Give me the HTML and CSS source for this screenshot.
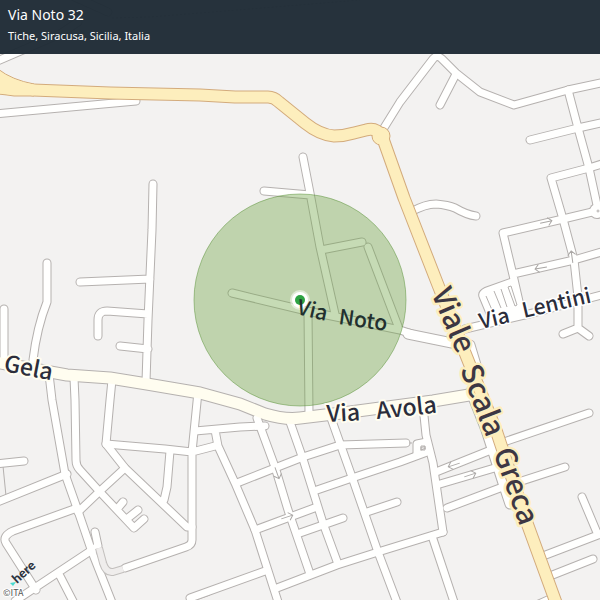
FILE: index.html
```html
<!DOCTYPE html>
<html lang="it">
<head>
<meta charset="utf-8">
<meta name="viewport" content="width=device-width, initial-scale=1">
<title>Via Noto 32</title>
<link rel="stylesheet" href="styles.css">
</head>
<body>
<main class="map">
<svg class="map-canvas" viewBox="0 0 600 600" role="img" aria-label="Via Noto 32, Tiche, Siracusa">
  <defs>
    <g id="streets">
      <path d="M382 131L400 102L433 59Q437 54 442 59L456 73L480 92L514 105L568 90L605 82"/>
      <path d="M456 74L440 105M568 90L578 128L589 168L597 205M530 140L578 128L605 122"/>
      <path d="M605 163L589 168L551 178L563 219L574 260L578 297L578 328M563 334L578 328L589 336"/>
      <path d="M605 209L563 219L503 233L513 275L521 310M605 251L574 260L513 274"/>
      <path d="M465 329L533 313L605 294"/>
      <path d="M232 293L307 311L400 330L415 335"/>
      <path d="M303 157L310 193L320 247L335 314M264 191L310 195M321 250L362 242M368 247L398 326M308 312L309 414"/>
      <path d="M411 212Q425 204 436 204Q448 205 455 208Q467 215 476 216"/>
      <path d="M-5 62L60 34L78 22M70 -5L108 12"/>
      <path d="M153 184L152 230L150 275L148 320L146 382M80 282L150 279M98 336L98 320Q98 311 107 311L148 314M120 346L148 349"/>
      <path d="M47 263L47 302Q37 327 33 360M4 309L4 362"/>
      <path d="M49 374L52 400L65 474L77 508L92 552L113 605"/>
      <path d="M74 378L75 400L76 460Q76 466 80 470L100 492L134 528L144 519M118 508L123 502M128 518L138 510"/>
      <path d="M112 380L110 400L106 444L125 468L187 527L192 527"/>
      <path d="M106 444L165 449L192 452L215 446M198 392L192 452L192 540Q192 545 186 547L125 568"/>
      <path d="M170 451L167 487L164 500M125 468L100 491L78 512M67 474L-5 503M-5 464L24 461"/>
      <path d="M77 508L13 531Q2 536 6 543L36 590M95 532L98 546L15 601M60 576L75 605"/>
      <path d="M195 431L240 427L265 426M215 430L218 446L235 483L255 530L279 605"/>
      <path d="M257 418L275 467L288 510L310 574M290 422L303 459L323 523L338 564M331 418L352 477L378 552L398 605"/>
      <path d="M237 483L275 468L303 457L340 445L406 443M317 490L352 478L400 462L427 452"/>
      <path d="M255 530L317 507M300 533L343 518M367 512L397 502M190 598L265 571M277 588L337 565L378 552L443 532"/>
      <path d="M423 406L426 435L433 463L443 532M432 536L455 605"/>
      <path d="M436 472L491 450M440 484L498 467M447 508L500 488L565 467M498 444L589 413"/>
      <path d="M543 556L598 535L605 532M582 497L598 535M550 576L593 559M530 608L550 599M417 455L417 444L427 442"/>
    </g>
    <g id="wide-streets">
      <path d="M408 334L452 343M470 345L476 365M471 392L486 430L502 480L510 504"/>
    </g>
    <g id="collector">
      <path d="M-10 361L67 375L110 378L147 384L200 393L240 404L265 414Q285 420 300 418L350 412L433 401L475 394"/>
    </g>
    <g id="avenue">
      <path d="M33 90L110 93L200 95L235 97L268 97Q274 97 279 102L305 123Q320 135 334 136Q344 136 354 133L366 130Q376 127 382 136L404 198L438 285L497 433L527 523L558 608"/>
    </g>
    <path id="arrow" d="M-6 0H6M2 -4L6 0L2 4"/>
  </defs>

  <rect class="land" width="600" height="600"/>
  <path class="thin-line" d="M112 18L150 17L250 9L360 0" stroke-dasharray="2 2"/>
  <path class="thin-line" d="M3 466L6 496M190 602L210 595"/>

  <path class="wide-casing" d="M-5 114L136 101"/>
  <use href="#streets" class="street-casing"/>
  <use href="#wide-streets" class="wide-casing"/>
  <path class="lot-casing" d="M513 278L485 288Q477 292 480 298L490 322L526 314Z"/>
  <circle class="street-end" cx="597" cy="211" r="8"/>
  <use href="#collector" class="collector-casing"/>
  <path class="wide-fill" d="M-5 114L136 101"/>
  <use href="#streets" class="street-fill"/>
  <use href="#wide-streets" class="wide-fill"/>
  <path class="lot-fill" d="M513 278L485 288Q477 292 480 298L490 322L526 314Z"/>
  <path class="thin-line" d="M486 296L492 310M494 291L501 308M501 289L507 307M508 287L511 286L517 305L515 306Z"/>
  <circle class="street-fill-area" cx="597" cy="211" r="7"/>
  <circle class="thin-line" cx="598" cy="211" r="1"/>
  <use href="#collector" class="collector-fill"/>
  <path class="thin-line" d="M421 446H425V450H421ZM409 443H412"/>
  <path class="private-casing" d="M99 548L103 563Q106 573 113 572L123 569"/>
  <path class="private-fill" d="M99 548L103 563Q106 573 113 572L123 569"/>

  <use href="#avenue" class="avenue-casing"/>
  <path class="avenue-edge" d="M-2 69Q12 80 34 84L34 96L14 96Q8 95 -2 94Z"/>
  <circle class="avenue-edge" cx="381" cy="136" r="9"/>
  <use href="#avenue" class="avenue-fill"/>
  <path class="avenue-area" d="M-2 70Q12 81 36 85V95L14 95Q8 94 -2 93Z"/>

  <g class="arrows">
    <use href="#arrow" transform="translate(546 222) rotate(-12)"/>
    <use href="#arrow" transform="translate(541 268) rotate(170)"/>
    <use href="#arrow" transform="translate(572 257) rotate(-98)"/>
    <use href="#arrow" transform="translate(277 473) rotate(70)"/>
    <use href="#arrow" transform="translate(287 517) rotate(-18)"/>
    <use href="#arrow" transform="translate(454 465) rotate(162)"/>
    <use href="#arrow" transform="translate(470 475) rotate(-18)"/>
  </g>

  <circle class="radius" cx="300" cy="300" r="106"/>
  <circle class="marker-glow" cx="300" cy="300" r="10"/>
  <circle class="marker-ring" cx="300" cy="300" r="8"/>
  <circle class="marker-dot" cx="300" cy="300" r="5"/>

  <g class="label label-street label-in-radius">
    <text transform="translate(296 314) rotate(13)">Via</text>
    <text transform="translate(338 324) rotate(8)">Noto</text>
  </g>
  <g class="label label-street label-halo-white">
    <text transform="translate(481 329) rotate(-13)">Via</text>
    <text transform="translate(524 318) rotate(-13)">Lentini</text>
  </g>
  <g class="label label-collector">
    <text transform="translate(3 371) rotate(11)">Gela</text>
    <text transform="translate(327 422) rotate(-3)">Via</text>
    <text transform="translate(377 419) rotate(-6)">Avola</text>
  </g>
  <g class="label label-avenue">
    <text transform="translate(431 293) rotate(67)">Viale</text>
    <text transform="translate(460 369) rotate(69)">Scala</text>
    <text transform="translate(493 452) rotate(70)">Greca</text>
  </g>

  <path class="logo-mark" d="M10 583L16 582L13 586Z"/>
  <text class="logo-text" transform="translate(17 584) rotate(-42)">here</text>
  <text class="copyright" x="3" y="596">©ITA</text>
</svg>
<header class="place">
  <h1 class="place-title">Via Noto 32</h1>
  <p class="place-area">Tiche, Siracusa, Sicilia, Italia</p>
</header>
</main>
</body>
</html>
```
FILE: styles.css
```css
body {
  margin: 0;
  font-family: "Noto Sans CJK SC", "Noto Sans", sans-serif;
}

.map {
  position: relative;
}

.map-canvas {
  display: block;
  width: 100%;
  height: auto;
}

.place {
  position: absolute;
  top: 0;
  left: 0;
  right: 0;
  padding: 5px 8px 9px;
  color: #fff;
  background: rgba(31, 43, 54, 0.97);
  font-family: "Noto Sans", sans-serif;
}

.place-title {
  margin: 0;
  font-size: 14px;
  line-height: 20px;
  font-weight: 400;
}

.place-area {
  margin: 2px 0 0;
  font-size: 11px;
  line-height: 18px;
}

.land { fill: #f3f2f1; }

.street-casing,
.street-fill,
.wide-casing,
.wide-fill,
.collector-casing,
.collector-fill,
.avenue-casing,
.avenue-fill,
.private-casing,
.private-fill {
  fill: none;
  stroke-linecap: round;
  stroke-linejoin: round;
}

.street-casing { stroke: #b5b1af; stroke-width: 9px; }
.street-fill { stroke: #fffffe; stroke-width: 7px; }
.wide-casing { stroke: #b5b1af; stroke-width: 11px; }
.wide-fill { stroke: #fffffe; stroke-width: 9px; }
.wide-casing[d] { stroke-width: 9px; }
.wide-fill[d] { stroke-width: 7px; }
.private-casing { stroke: #c2bfbd; stroke-width: 8px; stroke-linecap: butt; }
.private-fill { stroke: #efedec; stroke-width: 6px; stroke-linecap: butt; }
.collector-casing { stroke: #b5b1af; stroke-width: 13px; }
.collector-fill { stroke: #fffdf0; stroke-width: 11px; }
.avenue-casing { stroke: #d3ab7c; stroke-width: 13px; }
.avenue-fill { stroke: #fdeebd; stroke-width: 11px; }
.avenue-edge { fill: #fdeebd; stroke: #d3ab7c; stroke-width: 1px; }
.avenue-area { fill: #fdeebd; }
.lot-casing { fill: #fffffe; stroke: #b5b1af; stroke-width: 2px; }
.lot-fill { fill: #fffffe; }
.street-end { fill: #b5b1af; }
.street-fill-area { fill: #fffffe; }
.thin-line { fill: none; stroke: #b5b1af; stroke-width: 1px; }
.arrows { fill: none; stroke: #aaa7a5; stroke-width: 1px; }

.radius {
  fill: rgba(113, 164, 73, 0.4);
  stroke: rgba(90, 145, 55, 0.5);
  stroke-width: 1px;
}

.marker-glow { fill: rgba(255, 255, 255, 0.5); }
.marker-ring { fill: #fff; }
.marker-dot { fill: #2da343; }

.label {
  fill: #2b2d3b;
  stroke-linejoin: round;
  paint-order: stroke;
  font-weight: 500;
}

.label-street { font-size: 21px; }
.label-in-radius { fill: #22302f; }
.label-halo-white { stroke: #fff; stroke-width: 3px; }
.label-collector { font-size: 23px; stroke: #fffdf0; stroke-width: 4px; }
.label-avenue { font-size: 29px; fill: #3d3743; stroke: #fdeebd; stroke-width: 5px; }

.logo-mark { fill: #48dad0; }

.logo-text {
  font-family: Lato, sans-serif;
  font-size: 13px;
  font-weight: 900;
  fill: #2c3440;
}

.copyright {
  font-size: 9px;
  fill: #555;
  stroke: #fff;
  stroke-width: 2px;
  paint-order: stroke;
}
```
